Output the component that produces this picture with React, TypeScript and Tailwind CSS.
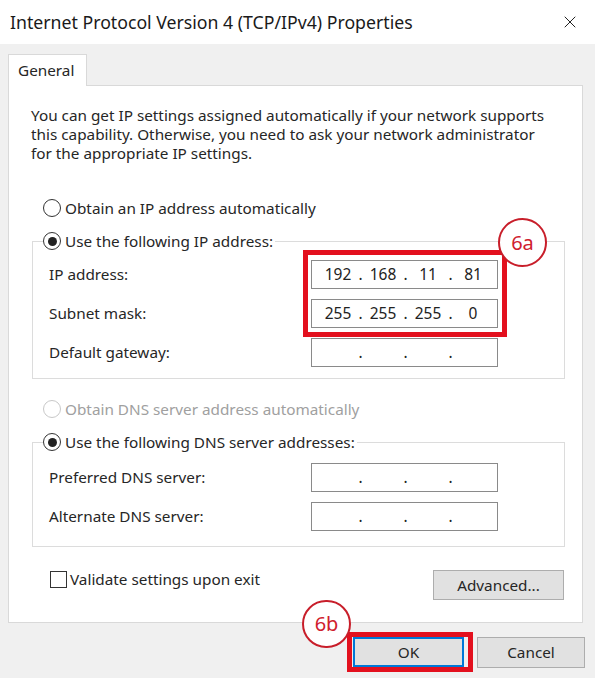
import { X } from 'lucide-react';

const segCell = 'w-[32px] text-center';
const dotCell = 'w-[13px] text-center';

function IpInput({ value }: { value?: string[] }) {
  const parts = value ?? ['', '', '', ''];
  return (
    <div className="w-[187px] h-[29px] border border-[#8a8a8a] bg-white flex items-center pl-[10px] text-[15.5px] text-[#222]">
      <span className={segCell}>{parts[0]}</span>
      <span className={dotCell}>.</span>
      <span className={segCell}>{parts[1]}</span>
      <span className={dotCell}>.</span>
      <span className={segCell}>{parts[2]}</span>
      <span className={dotCell}>.</span>
      <span className={segCell}>{parts[3]}</span>
    </div>
  );
}

function Radio({ checked, disabled }: { checked?: boolean; disabled?: boolean }) {
  return (
    <span
      className={`w-[18px] h-[18px] rounded-full border flex items-center justify-center shrink-0 bg-white ${
        disabled ? 'border-[#c8c8c8]' : 'border-[#333]'
      }`}
    >
      {checked && <span className="w-[9px] h-[9px] rounded-full bg-[#222]" />}
    </span>
  );
}

function FieldRow({ label, value }: { label: string; value?: string[] }) {
  return (
    <div className="flex items-center justify-between pl-[16px] pr-[66px]">
      <span>{label}</span>
      <IpInput value={value} />
    </div>
  );
}

export default function App() {
  return (
    <div className="w-[595px] h-[678px] bg-[#f0f0f0] relative overflow-hidden text-[#262626] font-['Noto_Sans','DejaVu_Sans',sans-serif] text-[15.3px]">
      {/* title bar */}
      <div className="h-[44px] bg-white flex items-center justify-between pl-[10px] pr-[15px]">
        <span className="text-[17.7px] text-[#1a1a1a]">
          Internet Protocol Version 4 (TCP/IPv4) Properties
        </span>
        <X size={20} strokeWidth={1.2} className="text-[#222]" />
      </div>

      <div className="pl-[8px] pt-[10px]">
        <div className="w-[79px] h-[32px] bg-white border border-b-0 border-[#d9d9d9] flex items-center pl-[9px] relative z-10 -mb-px">
          General
        </div>

        {/* tab panel */}
        <div className="w-[575px] h-[538px] bg-white border border-[#d9d9d9] pl-[22px] pr-[17px] pt-[20px]">
          <p className="leading-[19px]">
            You can get IP settings assigned automatically if your network supports
            <br />
            this capability. Otherwise, you need to ask your network administrator
            <br />
            for the appropriate IP settings.
          </p>

          <div className="flex items-center gap-[4px] ml-[12px] mt-[35px] h-[20px]">
            <Radio />
            <span>Obtain an IP address automatically</span>
          </div>

          <fieldset className="ml-[1px] mt-[13px] border border-[#dcdcdc] pb-[11px]">
            <legend className="ml-[10px] pr-[2px] bg-white">
              <span className="flex items-center gap-[4px] h-[20px]">
                <Radio checked />
                <span>Use the following IP address:</span>
              </span>
            </legend>
            <div className="flex flex-col gap-[10px] pt-[9px]">
              <FieldRow label="IP address:" value={['192', '168', '11', '81']} />
              <FieldRow label="Subnet mask:" value={['255', '255', '255', '0']} />
              <FieldRow label="Default gateway:" />
            </div>
          </fieldset>

          <div className="flex items-center gap-[4px] ml-[12px] mt-[20px] h-[20px] text-[#a0a0a0]">
            <Radio disabled />
            <span>Obtain DNS server address automatically</span>
          </div>

          <fieldset className="ml-[1px] mt-[13px] border border-[#dcdcdc] pb-[15px]">
            <legend className="ml-[10px] pr-[2px] bg-white">
              <span className="flex items-center gap-[4px] h-[20px]">
                <Radio checked />
                <span>Use the following DNS server addresses:</span>
              </span>
            </legend>
            <div className="flex flex-col gap-[10px] pt-[11px]">
              <FieldRow label="Preferred DNS server:" />
              <FieldRow label="Alternate DNS server:" />
            </div>
          </fieldset>

          <div className="flex items-start justify-between mt-[23px] pl-[19px] pr-[1px]">
            <div className="flex items-center gap-[3px] h-[18px]">
              <span className="w-[17px] h-[17px] border border-[#333] bg-white" />
              <span>Validate settings upon exit</span>
            </div>
            <button className="w-[131px] h-[30px] bg-[#e1e1e1] border border-[#adadad] text-[#262626]">
              Advanced...
            </button>
          </div>
        </div>
      </div>

      {/* dialog buttons */}
      <div className="flex justify-end gap-[13px] pr-[10px] mt-[14px]">
        <button className="w-[111px] h-[30px] bg-[#e1e1e1] border-2 border-[#0078d7] text-[#262626]">
          OK
        </button>
        <button className="w-[108px] h-[31px] bg-[#e1e1e1] border border-[#adadad] text-[#262626]">
          Cancel
        </button>
      </div>

      {/* annotations */}
      <div className="absolute left-[303px] top-[250px] w-[204px] h-[87px] border-[5px] border-[#e3101e]" />
      <div className="absolute left-[498px] top-[218px] w-[49px] h-[49px] rounded-full border-[2.5px] border-[#c81e2a] bg-white flex items-center justify-center text-[#d0202e] text-[20px]">
        6a
      </div>
      <div className="absolute left-[347px] top-[632px] w-[126px] h-[40px] border-[5px] border-[#e3101e]" />
      <div className="absolute left-[302px] top-[600px] w-[49px] h-[48px] rounded-full border-[2.5px] border-[#c81e2a] bg-white flex items-center justify-center text-[#d0202e] text-[20px]">
        6b
      </div>
    </div>
  );
}
